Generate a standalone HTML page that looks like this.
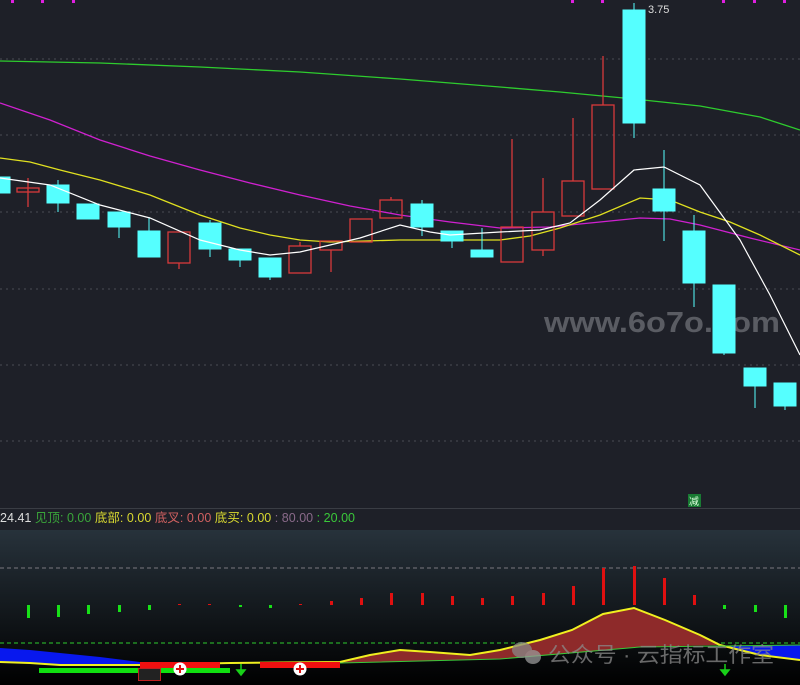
<!DOCTYPE html>
<html><head><meta charset="utf-8"><style>
body{margin:0;width:800px;height:685px;overflow:hidden;background:#1e2028;font-family:"Liberation Sans","Noto Sans CJK SC",sans-serif}
</style></head><body>
<svg width="800" height="685" xmlns="http://www.w3.org/2000/svg" style="position:absolute;left:0;top:0">
<defs><linearGradient id="g" x1="0" y1="0" x2="0" y2="1"><stop offset="0" stop-color="#27323b"/><stop offset="1" stop-color="#000"/></linearGradient></defs>
<rect width="800" height="508" fill="#1e2028"/>
<g stroke="#4a4d55" stroke-dasharray="2,4" stroke-width="1">
<line x1="0" y1="59" x2="800" y2="59"/><line x1="0" y1="135" x2="800" y2="135"/><line x1="0" y1="212" x2="800" y2="212"/><line x1="0" y1="289" x2="800" y2="289"/><line x1="0" y1="365" x2="800" y2="365"/><line x1="0" y1="441" x2="800" y2="441"/>
</g>
<g fill="#e020e0"><rect x="11" y="0" width="3" height="3"/><rect x="41" y="0" width="3" height="3"/><rect x="72" y="0" width="3" height="3"/><rect x="571" y="0" width="3" height="3"/><rect x="601" y="0" width="3" height="3"/><rect x="722" y="0" width="3" height="3"/><rect x="753" y="0" width="3" height="3"/><rect x="783" y="0" width="3" height="3"/></g>
<text x="544" y="332" font-size="29" font-weight="bold" fill="#6a6c72" opacity="0.8" textLength="236" lengthAdjust="spacingAndGlyphs">www.6o7o.com</text>
<polyline fill="none" stroke="#2ecc2e" stroke-width="1.3" points="0,61 100,63 200,67 300,72 400,79 500,87 560,92 634,99 700,106 760,117 800,130"/>
<polyline fill="none" stroke="#d020d0" stroke-width="1.3" points="0,103 50,120 100,140 150,156 200,170 250,183 300,195 350,206 400,215 450,222 500,228 550,227 600,222 640,218 670,219 700,225 750,238 800,250"/>
<polyline fill="none" stroke="#e0e020" stroke-width="1.3" points="0,158 30,162 60,170 100,180 150,195 200,215 240,228 270,235 300,240 330,242 400,240 450,240 500,240 530,236 560,228 600,215 640,198 670,200 700,212 730,222 760,235 800,255"/>
<g stroke="#5ff" fill="#5ff">
<line x1="58" y1="180" x2="58" y2="212"/><line x1="119" y1="212" x2="119" y2="238"/><line x1="149" y1="217" x2="149" y2="257"/><line x1="210" y1="220" x2="210" y2="257"/><line x1="240" y1="249" x2="240" y2="267"/><line x1="270" y1="258" x2="270" y2="280"/><line x1="422" y1="200" x2="422" y2="236"/><line x1="452" y1="231" x2="452" y2="248"/><line x1="482" y1="228" x2="482" y2="257"/><line x1="634" y1="3" x2="634" y2="138"/><line x1="664" y1="150" x2="664" y2="241"/><line x1="694" y1="215" x2="694" y2="307"/><line x1="724" y1="285" x2="724" y2="355"/><line x1="755" y1="368" x2="755" y2="408"/><line x1="785" y1="383" x2="785" y2="410"/>
<rect x="-10" y="177" width="20" height="16"/><rect x="47" y="185" width="22" height="18"/><rect x="77" y="204" width="22" height="15"/><rect x="108" y="212" width="22" height="15"/><rect x="138" y="231" width="22" height="26"/><rect x="199" y="223" width="22" height="26"/><rect x="229" y="249" width="22" height="11"/><rect x="259" y="258" width="22" height="19"/><rect x="411" y="204" width="22" height="23"/><rect x="441" y="231" width="22" height="10"/><rect x="471" y="250" width="22" height="7"/><rect x="623" y="10" width="22" height="113"/><rect x="653" y="189" width="22" height="22"/><rect x="683" y="231" width="22" height="52"/><rect x="713" y="285" width="22" height="68"/><rect x="744" y="368" width="22" height="18"/><rect x="774" y="383" width="22" height="23"/>
</g>
<g stroke="#d83a3a" fill="none" stroke-width="1.3">
<line x1="28" y1="178" x2="28" y2="207"/><rect x="17" y="188" width="22" height="4"/>
<line x1="179" y1="263" x2="179" y2="269"/><rect x="168" y="232" width="22" height="31"/>
<line x1="300" y1="242" x2="300" y2="246"/><rect x="289" y="246" width="22" height="27"/>
<line x1="331" y1="250" x2="331" y2="272"/><rect x="320" y="241" width="22" height="9"/>
<rect x="350" y="219" width="22" height="23"/>
<line x1="391" y1="197" x2="391" y2="200"/><rect x="380" y="200" width="22" height="18"/>
<line x1="512" y1="139" x2="512" y2="227"/><rect x="501" y="227" width="22" height="35"/>
<line x1="543" y1="178" x2="543" y2="212"/><line x1="543" y1="250" x2="543" y2="256"/><rect x="532" y="212" width="22" height="38"/>
<line x1="573" y1="118" x2="573" y2="181"/><rect x="562" y="181" width="22" height="35"/>
<line x1="603" y1="56" x2="603" y2="105"/><rect x="592" y="105" width="22" height="84"/>
</g>
<polyline fill="none" stroke="#fff" stroke-width="1.2" points="0,178 50,185 100,205 150,218 200,240 240,250 270,255 300,252 330,245 360,238 400,225 430,232 450,235 500,232 540,230 570,223 600,200 634,170 664,167 700,185 740,240 770,295 800,355"/>
<text x="648" y="13" font-size="11" fill="#ddd">3.75</text>
<rect x="688" y="494" width="13" height="13" fill="#197a33"/><text x="689" y="505" font-size="10" fill="#dfd">减</text>
<line x1="0" y1="508.5" x2="800" y2="508.5" stroke="#3a3d44"/>
<text x="0" y="522" font-size="12.5" textLength="355" lengthAdjust="spacing"><tspan fill="#ddd">24.41 </tspan><tspan fill="#3aa43a">见顶: 0.00 </tspan><tspan fill="#d8d830">底部: 0.00 </tspan><tspan fill="#d06060">底叉: 0.00 </tspan><tspan fill="#d8d830">底买: 0.00 </tspan><tspan fill="#8a6a8a">: 80.00 </tspan><tspan fill="#3ac83a">: 20.00</tspan></text>
<rect x="0" y="530" width="800" height="155" fill="url(#g)"/>
<line x1="0" y1="568" x2="800" y2="568" stroke="#7a7880" stroke-dasharray="4,3"/>
<line x1="0" y1="643" x2="800" y2="643" stroke="#2ecc2e" stroke-dasharray="4,3"/>
<g fill="#18e018"><rect x="27" y="605" width="3" height="13"/><rect x="57" y="605" width="3" height="12"/><rect x="87" y="605" width="3" height="9"/><rect x="118" y="605" width="3" height="7"/><rect x="148" y="605" width="3" height="5"/><rect x="239" y="605" width="3" height="2"/><rect x="269" y="605" width="3" height="3"/><rect x="723" y="605" width="3" height="4"/><rect x="754" y="605" width="3" height="7"/><rect x="784" y="605" width="3" height="13"/></g>
<g fill="#e01010"><rect x="178" y="604" width="3" height="1"/><rect x="208" y="604" width="3" height="1"/><rect x="299" y="604" width="3" height="1"/><rect x="330" y="601" width="3" height="4"/><rect x="360" y="598" width="3" height="7"/><rect x="390" y="593" width="3" height="12"/><rect x="421" y="593" width="3" height="12"/><rect x="451" y="596" width="3" height="9"/><rect x="481" y="598" width="3" height="7"/><rect x="511" y="596" width="3" height="9"/><rect x="542" y="593" width="3" height="12"/><rect x="572" y="586" width="3" height="19"/><rect x="602" y="568" width="3" height="37"/><rect x="633" y="566" width="3" height="39"/><rect x="663" y="578" width="3" height="27"/><rect x="693" y="595" width="3" height="10"/></g>
<polygon fill="#0818ee" points="0,648 30,650 60,653 100,657 140,662 140,665 60,665 30,663 0,662"/>
<polygon fill="#0818ee" points="720,646 800,645 800,660 760,655 720,646"/>
<polygon fill="#8e2a2a" points="340,662 370,655 400,650 430,652 470,655 500,650 540,640 572,630 603,614 634,608 665,620 700,635 720,645 640,647 500,659 340,663"/>
<polyline fill="none" stroke="#f0f020" stroke-width="2" points="0,662 30,663 60,665 140,665 230,663 340,662 370,655 400,650 430,652 470,655 500,650 540,640 572,630 603,614 634,608 665,620 700,635 720,645 760,655 800,660"/>
<polyline fill="none" stroke="#3ac83a" stroke-width="1" points="340,663 500,659 640,647 720,646 800,645"/>
<rect x="140" y="662" width="80" height="6" fill="#f01010"/><rect x="260" y="662" width="80" height="6" fill="#f01010"/>
<rect x="39" y="668" width="191" height="5" fill="#10e010"/>
<rect x="138.5" y="668.5" width="22" height="12" fill="#222" stroke="#c02020"/>
<g><circle cx="180" cy="669" r="6.5" fill="#fff"/><path d="M176 669h8M180 665v8" stroke="#e01010" stroke-width="2"/><circle cx="300" cy="669" r="6.5" fill="#fff"/><path d="M296 669h8M300 665v8" stroke="#e01010" stroke-width="2"/></g>
<path d="M241 664v9M237 670l4 5 4-5z" stroke="#18d018" fill="#18d018" stroke-width="1.5"/>
<path d="M725 664v9M721 670l4 5 4-5z" stroke="#18d018" fill="#18d018" stroke-width="1.5"/>
<g opacity="0.75"><ellipse cx="522" cy="650" rx="10" ry="8" fill="#888"/><ellipse cx="533" cy="657" rx="8" ry="7" fill="#999"/>
<text x="548" y="662" font-size="21" fill="#8a8a8a" textLength="226" lengthAdjust="spacingAndGlyphs">公众号 · 云指标工作室</text></g>
</svg>
</body></html>
